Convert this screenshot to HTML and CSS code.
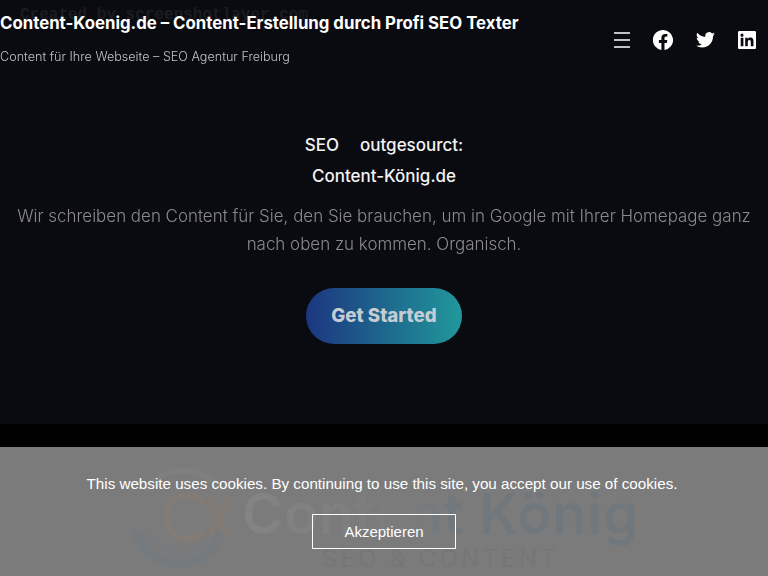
FILE: index.html
```html
<!DOCTYPE html>
<html lang="de">
<head>
  <meta charset="UTF-8" />
  <title>Content-Koenig.de</title>
  <link rel="stylesheet" href="styles.css">
</head>
<body>

<div class="page">
  <p class="watermark">Created by screenshotlayer.com</p>

  <!-- Kopfzeile -->
  <header class="topbar">
    <div class="brand">
      <h1>Content-Koenig.de – Content-Erstellung durch Profi SEO Texter</h1>
      <p>Content für Ihre Webseite – SEO Agentur Freiburg</p>
    </div>
    <nav class="icons">
      <svg width="16" height="16" viewBox="0 0 16 16"><path d="M0 1h16M0 8h16M0 15h16" stroke="#fff" stroke-width="1.500" fill="none"/></svg>
      <svg width="20" height="20" viewBox="0 0 20 20"><path fill="#fff" d="M10 0a10 10 0 0 0-1.600 19.900v-7H5.900V10h2.500V7.800c0-2.500 1.500-3.900 3.800-3.900 1.100 0 2.200.2 2.200.2v2.500h-1.300c-1.200 0-1.600.8-1.600 1.600V10h2.800l-.45 2.900h-2.350v7A10 10 0 0 0 10 0z"/></svg>
      <svg width="19" height="16" viewBox="0 0 24 20"><path fill="#fff" d="M24 2.400a9.800 9.800 0 0 1-2.800.8A4.900 4.900 0 0 0 23.300.5a9.800 9.800 0 0 1-3.100 1.200 4.900 4.900 0 0 0-8.400 4.500A14 14 0 0 1 1.700.9a4.900 4.900 0 0 0 1.500 6.600 4.900 4.900 0 0 1-2.200-.6v.1a4.900 4.900 0 0 0 3.900 4.800 4.900 4.900 0 0 1-2.200.1 4.900 4.900 0 0 0 4.600 3.400A9.900 9.900 0 0 1 0 17.300 14 14 0 0 0 7.500 19.500c9.100 0 14-7.500 14-14v-.6A10 10 0 0 0 24 2.400z"/></svg>
      <svg width="18" height="18" viewBox="0 0 18 18"><path fill="#fff" fill-rule="evenodd" d="M1.300 0h15.400C17.400 0 18 .6 18 1.300v15.400c0 .7-.6 1.300-1.300 1.300H1.300C.6 18 0 17.400 0 16.700V1.300C0 .6.600 0 1.300 0zM2.700 6.800v8.500h2.700V6.800zM4 2.600a1.550 1.550 0 1 0 0 3.100 1.550 1.550 0 0 0 0-3.100zM7.200 6.800v8.500h2.600v-4.200c0-1.100.2-2.200 1.600-2.200s1.400 1.300 1.400 2.300v4.100h2.700v-4.700c0-2.300-.5-4-3.200-4-1.300 0-2.100.7-2.500 1.400V6.800z"/></svg>
    </nav>
  </header>

  <!-- Hero -->
  <section class="hero">
    <h2><span class="gap-word">SEO</span>outgesourct:<br>Content-König.de</h2>
    <p>Wir schreiben den Content für Sie, den Sie brauchen, um in Google mit Ihrer Homepage ganz nach oben zu kommen. Organisch.</p>
    <a class="cta" href="#">Get Started</a>
  </section>

  <div class="footer-strip"></div>

  <!-- Cookie Hinweis, das Logo scheint durch -->
  <div class="cookie">
    <div class="logo">
      <svg class="logo-mark" width="100" height="104" viewBox="0 0 100 104">
        <path d="M12 26A46 46 0 0 1 84 20" stroke="#7f7f7f" stroke-width="6" fill="none"/>
        <path d="M3 66A44 44 0 0 0 88 66" stroke="#747a7e" stroke-width="9" fill="none"/>
        <path d="M16 66A33 33 0 0 0 74 74" stroke="#777b7d" stroke-width="5" fill="none"/>
        <path d="M71 37A22 22 0 1 0 71 67" stroke="#837b75" stroke-width="6" fill="none"/>
        <path d="M74 34L94 70M96 34L76 70" stroke="#817a75" stroke-width="6" fill="none"/>
      </svg>
      <div class="logo-text">
        <span class="logo-name">Content König</span>
        <span class="logo-sub">SEO &amp; CONTENT</span>
      </div>
    </div>
    <p class="cookie-text">This website uses cookies. By continuing to use this site, you accept our use of cookies.</p>
    <button class="cookie-btn">Akzeptieren</button>
  </div>
</div>

</body>
</html>
```

FILE: styles.css
```css
html, body {
  margin: 0;
  padding: 0;
}

body {
  background-color: #0a0b10;
  font-family: Inter, "Open Sans", sans-serif;
  color: #fff;
}

.page {
  position: relative;
  width: 768px;
  height: 576px;
  overflow: hidden;
  background-color: #0a0b10;
}

.watermark {
  position: absolute;
  top: 6px;
  left: 20px;
  margin: 0;
  font-family: "Liberation Mono", monospace;
  font-size: 16px;
  font-weight: bold;
  color: #1b1c20;
}

.topbar {
  position: relative;
  display: flex;
  justify-content: space-between;
  height: 80px;
}

.brand h1 {
  margin: 13px 0 0;
  font-size: 16.8px;
  line-height: 21px;
  font-weight: 700;
  white-space: nowrap;
}

.brand p {
  margin: 14px 0 0;
  font-size: 12.6px;
  line-height: 17px;
  font-weight: 300;
  color: #c4c5c8;
  opacity: 0.99;
  white-space: nowrap;
}

.icons {
  display: flex;
  align-items: center;
  gap: 23px;
  padding-right: 12px;
}

.hero {
  height: 344px;
  padding-top: 50px;
  box-sizing: border-box;
  text-align: center;
}

.hero h2 {
  margin: 0;
  font-size: 17px;
  line-height: 31px;
  font-weight: 500;
  color: #f2f2f3;
}

.gap-word {
  margin-right: 21px;
}

.hero p {
  margin: 10px 16px 0;
  font-size: 16.95px;
  line-height: 28px;
  font-weight: 300;
  color: #8c8c8e;
  opacity: 0.99;
}

.cta {
  display: inline-block;
  width: 156px;
  height: 56px;
  margin-top: 30px;
  border-radius: 28px;
  background: linear-gradient(90deg, #1c3680, #20989b);
  color: #c6ccd4;
  font-size: 18.7px;
  line-height: 56px;
  font-weight: 800;
  text-decoration: none;
}

.footer-strip {
  height: 23px;
  background-color: #000;
}

.cookie {
  position: relative;
  height: 129px;
  display: flex;
  flex-direction: column;
  align-items: center;
  background-color: #7b7b7b;
  overflow: hidden;
  font-family: "Liberation Sans", Arial, sans-serif;
}

.logo {
  position: absolute;
  top: 18px;
  left: 133px;
  display: flex;
  gap: 9px;
  font-family: Inter, sans-serif;
}

.logo-mark {
  flex: none;
}

.logo-text {
  display: flex;
  flex-direction: column;
  align-items: center;
  padding-top: 16px;
}

.logo-name {
  font-size: 56px;
  line-height: 66px;
  font-weight: 600;
  letter-spacing: 0.9px;
  white-space: nowrap;
  background: linear-gradient(90deg, #838484, #7b7c7d 40%, #70787e 55%);
  -webkit-background-clip: text;
  background-clip: text;
  color: transparent;
}

.logo-sub {
  font-size: 24px;
  line-height: 24px;
  letter-spacing: 3.3px;
  color: #767676;
}

.cookie-text {
  position: relative;
  margin: 27px 4px 0 0;
  font-size: 15.2px;
  line-height: 19px;
  color: #fff;
}

.cookie-btn {
  position: relative;
  width: 144px;
  height: 35px;
  margin-top: 21px;
  padding: 0;
  border: 1px solid #fff;
  background: transparent;
  color: #fff;
  font-family: inherit;
  font-size: 15px;
}
```
